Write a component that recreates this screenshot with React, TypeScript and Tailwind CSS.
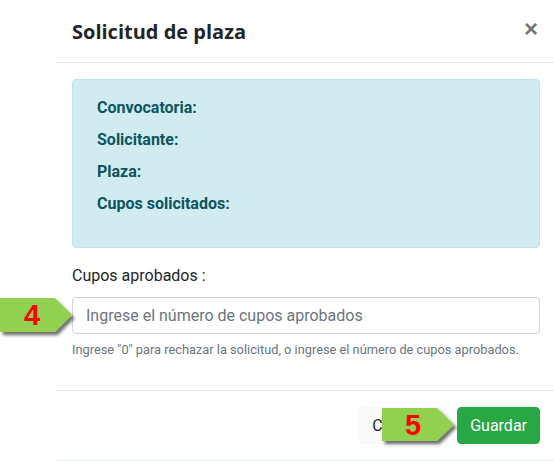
import React from "react";

function Callout({ n, className, digitW }: { n: string; className: string; digitW: string }) {
  return (
    <div className={"absolute " + className}>
      <svg width="100%" height="100%" viewBox="0 0 80 42" preserveAspectRatio="none" className="absolute left-0 top-0 overflow-visible">
        <defs>
          <filter id={"sh" + n} x="-20%" y="-20%" width="150%" height="160%">
            <feDropShadow dx="3" dy="4" stdDeviation="2" floodColor="#000" floodOpacity="0.55" />
          </filter>
        </defs>
        <polygon points="0,0 61,0 80,21 61,42 0,42" fill="#92d050" filter={"url(#sh" + n + ")"} />
      </svg>
      <span className={"relative flex h-full items-center justify-center pt-[1px] text-[29px] font-bold leading-none text-[#ff0000] [font-family:'Liberation_Sans',Arial,sans-serif] " + digitW}>
        {n}
      </span>
    </div>
  );
}

export default function App() {
  const labels = ["Convocatoria:", "Solicitante:", "Plaza:", "Cupos solicitados:"];
  return (
    <div className="relative h-[461px] w-[554px] overflow-hidden bg-white [font-family:Roboto,'Liberation_Sans',sans-serif]">
      <div className="ml-[56px] flex w-[500px] flex-col border-b border-[#e9ecef]">
        <div className="flex h-[63px] items-center justify-between border-b border-[#e9ecef] pl-4 pr-[18px]">
          <h1 className="pt-[1px] text-[20px] font-bold text-[#212529] [font-family:'Open_Sans',sans-serif]">
            Solicitud de plaza
          </h1>
          <span className="pb-[4px] text-[24px] font-bold leading-none text-[#777] [font-family:'Liberation_Sans',Arial,sans-serif]">
            ×
          </span>
        </div>
        <div className="flex flex-col px-4 pt-4">
          <div className="flex h-[169px] flex-col rounded-[4px] border border-[#bee5eb] bg-[#d1ecf1] pl-[24px] pt-[12px]">
            {labels.map((l) => (
              <div key={l} className="flex h-[32px] items-center text-[16px] font-bold text-[#0c5460]">
                {l}
              </div>
            ))}
          </div>
          <label className="mt-[16px] flex h-[24px] items-center text-[16px] text-[#212529]">Cupos aprobados :</label>
          <div className="mt-[9px] flex h-[37px] items-center rounded-[4px] border border-[#ced4da] px-[13px] text-[16px] text-[#6c757d]">
            Ingrese el número de cupos aprobados
          </div>
          <p className="mt-[7px] h-[18px] text-[12.8px] leading-[18px] text-[#6c757d]">
            Ingrese "0" para rechazar la solicitud, o ingrese el número de cupos aprobados.
          </p>
          <div className="h-[31px]" />
        </div>
        <div className="flex justify-end gap-[9px] border-t border-[#e9ecef] px-4 py-4">
          <button className="h-[37px] rounded-[4px] border border-[#f8f9fa] bg-[#f8f9fa] px-[12px] text-[16px] text-[#212529]">
            Cancelar
          </button>
          <button className="h-[37px] rounded-[4px] border border-[#28a745] bg-[#28a745] px-[12px] text-[16px] text-white">
            Guardar
          </button>
        </div>
      </div>
      <Callout n="4" digitW="w-[64px]" className="left-0 top-[298px] h-[34px] w-[72px]" />
      <Callout n="5" digitW="w-[62px]" className="left-[382px] top-[408px] h-[33px] w-[72px]" />
    </div>
  );
}
